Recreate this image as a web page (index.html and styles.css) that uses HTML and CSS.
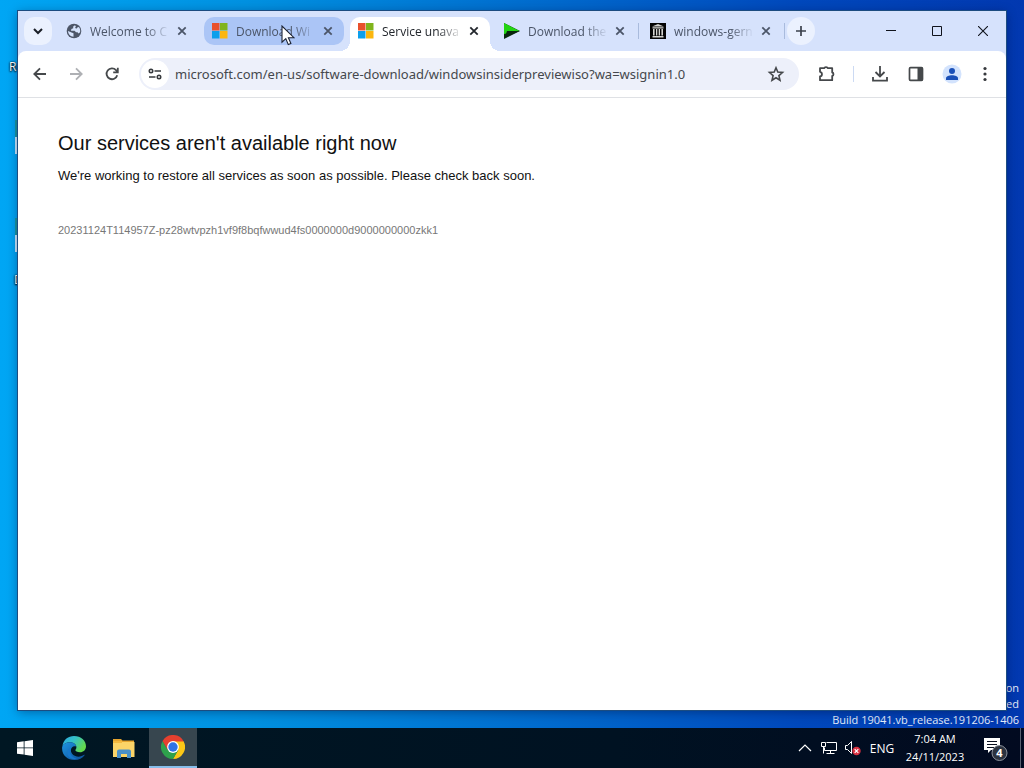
FILE: index.html
```html
<!DOCTYPE html>
<html lang="en">
<head>
<meta charset="utf-8">
<title>Service unavailable</title>
<link rel="stylesheet" href="styles.css">
</head>
<body>
<svg class="defs" aria-hidden="true">
  <symbol id="close" viewBox="0 0 16 16"><path d="M4.300 4.300l7.400 7.400M11.700 4.300l-7.400 7.400" fill="none" stroke="currentColor" stroke-width="1.800"/></symbol>
  <symbol id="ms" viewBox="0 0 16 16"><path fill="#e8502c" d="M0 0h7.500v7.500H0z"/><path fill="#80b41c" d="M8 0h7.500v7.500H8z"/><path fill="#0c9fec" d="M0 8h7.500v7.500H0z"/><path fill="#fbb60e" d="M8 8h7.500v7.500H8z"/></symbol>
</svg>
<main class="desktop">
  <div class="shortcut shortcut-bin">Recycle Bin</div>
  <div class="shortcut-icon icon-a"></div>
  <div class="shortcut-icon icon-b"></div>
  <div class="shortcut shortcut-download">Downloads</div>
  <div class="watermark">
    <span>Windows 10 Enterprise Evaluation</span>
    <span>Windows License is expired</span>
    <span>Build 19041.vb_release.191206-1406</span>
  </div>

  <section class="window">
    <header class="tabstrip">
      <button class="tab-search" aria-label="Search tabs"><svg width="16" height="16" viewBox="0 0 16 16"><path d="M4 6l4 4 4-4" fill="none" stroke="#1b1f27" stroke-width="2"/></svg></button>
      <nav class="tabs">
        <div class="tab">
          <svg width="16" height="16" viewBox="0 0 16 16"><circle cx="8" cy="8" r="7.300" fill="#4c5567"/><path d="M9 2.200L7.200 3.600v1.600L5.400 6l-.4 1.800h3.600l1.400 1.400h1.500l1 1.200 1.600-1.200c.4-2.400-.2-4-1.200-5.200l-1.600.4-1 1.400-1.200-1 .8-1.200zM2 8l3.500 1.600 2 .6v3.600C4.500 13.500 2.200 11.200 2 8z" fill="#d5e2fb"/></svg>
          <a class="title" href="#">Welcome to C</a>
          <button class="close" aria-label="Close tab"><svg width="16" height="16"><use href="#close"/></svg></button>
        </div>
        <div class="tab hovered">
          <svg width="16" height="16"><use href="#ms"/></svg>
          <a class="title" href="#">Download Wi</a>
          <button class="close" aria-label="Close tab"><svg width="16" height="16"><use href="#close"/></svg></button>
        </div>
        <div class="tab active">
          <svg width="16" height="16"><use href="#ms"/></svg>
          <a class="title" href="#">Service unava</a>
          <button class="close" aria-label="Close tab"><svg width="16" height="16"><use href="#close"/></svg></button>
        </div>
        <div class="tab divided">
          <svg width="16" height="16" viewBox="0 0 16 16"><path d="M0 0l16 8-16 8z" fill="#0a2c0e"/><path d="M0 0l15.500 8L0 11z" fill="#22d412"/><path d="M3 8h12.500L1 14z" fill="#08240c"/></svg>
          <a class="title" href="#">Download the</a>
          <button class="close" aria-label="Close tab"><svg width="16" height="16"><use href="#close"/></svg></button>
        </div>
        <div class="tab divided">
          <svg width="16" height="16" viewBox="0 0 16 16"><path d="M0 0h16v16H0z" fill="#050505"/><path d="M8 1l6 2.500H2zM2.500 4.200h11v1.300h-11zM3 6h1.600v6.500H3zM6 6h1.300v6.500H6zM8.700 6H10v6.500H8.700zM11.400 6H13v6.500h-1.600zM2.500 13h11v1.500h-11z" fill="#d4d4d0"/></svg>
          <a class="title" href="#">windows-gern</a>
          <button class="close" aria-label="Close tab"><svg width="16" height="16"><use href="#close"/></svg></button>
        </div>
      </nav>
      <button class="new-tab" aria-label="New tab"><svg width="16" height="16" viewBox="0 0 16 16"><path d="M3 8h10M8 3v10" fill="none" stroke="#3c414c" stroke-width="1.700"/></svg></button>
      <div class="caption">
        <button aria-label="Minimize"><svg width="10" height="10"><path d="M0 4.500h10" stroke="#10131c"/></svg></button>
        <button aria-label="Maximize"><svg width="10" height="10"><path d="M.5.5h9v9h-9z" fill="none" stroke="#10131c"/></svg></button>
        <button aria-label="Close"><svg width="10" height="10"><path d="M0 0l10 10M10 0L0 10" stroke="#10131c" stroke-width="1.100"/></svg></button>
      </div>
    </header>

    <div class="toolbar">
      <div class="navigation">
        <button aria-label="Back"><svg width="20" height="20" viewBox="0 0 20 20"><path d="M16 10H4.500M10 4.300L4.300 10l5.700 5.700" fill="none" stroke="#45484b" stroke-width="1.800"/></svg></button>
        <button aria-label="Forward" disabled><svg width="20" height="20" viewBox="0 0 20 20"><path d="M4 10h11.500M10 4.300l5.700 5.700-5.700 5.700" fill="none" stroke="#aeb0b4" stroke-width="1.800"/></svg></button>
        <button aria-label="Reload"><svg width="20" height="20" viewBox="0 0 20 20"><path d="M15.200 11.200A5.400 5.400 0 1 1 14 6.200l1.600 1.600M15.800 3.800v4.600h-4.600" fill="none" stroke="#45484b" stroke-width="1.800"/></svg></button>
      </div>
      <div class="omnibox">
        <button class="site-info" aria-label="Site information"><svg width="16" height="16" viewBox="0 0 16 16" fill="none" stroke="#35383c" stroke-width="1.600"><circle cx="4" cy="5" r="1.700"/><path d="M7.500 5H14M2 11h6.500"/><circle cx="12" cy="11" r="1.700"/></svg></button>
        <input class="address" type="text" aria-label="Address" value="microsoft.com/en-us/software-download/windowsinsiderpreviewiso?wa=wsignin1.0">
        <button class="bookmark" aria-label="Bookmark this tab"><svg width="18" height="18" viewBox="0 0 18 18"><path d="M9 2.800l1.800 4.300 4.700.4-3.600 3.100 1.100 4.600L9 12.700l-4 2.500 1.100-4.600-3.600-3.100 4.700-.4z" fill="none" stroke="#45484b" stroke-width="1.600"/></svg></button>
      </div>
      <div class="actions">
        <button class="extensions" aria-label="Extensions"><svg width="20" height="20" viewBox="0 0 20 20"><path d="M3 4.200h4.300c.2-1.500 3.200-1.500 3.400 0h4.500v4.300c1.700.3 1.700 3.200 0 3.500v4.200H3v-3.700c2.600-.5 2.600-4.200 0-4.700z" fill="none" stroke="#45484b" stroke-width="1.800" stroke-linejoin="round"/></svg></button>
        <span class="divider"></span>
        <button aria-label="Downloads"><svg width="20" height="20" viewBox="0 0 20 20"><path d="M10 2v10M5.500 8l4.500 4.500L14.500 8M3 13v3.600h14V13" fill="none" stroke="#45484b" stroke-width="1.800"/></svg></button>
        <button aria-label="Side panel"><svg width="20" height="20" viewBox="0 0 20 20"><rect x="3.500" y="3.700" width="13" height="12.600" rx="1" fill="none" stroke="#45484b" stroke-width="1.700"/><path d="M11.500 3.500h5v13h-5z" fill="#45484b"/></svg></button>
        <button aria-label="Profile"><svg width="20" height="20" viewBox="0 0 20 20"><circle cx="10" cy="10" r="9.500" fill="#d3e3fd"/><circle cx="10" cy="7" r="3" fill="#1a50b8"/><path d="M4 16v-1.800c0-4 12-4 12 0V16z" fill="#1a50b8"/></svg></button>
        <button class="menu" aria-label="Menu"><svg width="20" height="20" viewBox="0 0 20 20" fill="#35383c"><circle cx="10" cy="4.500" r="1.600"/><circle cx="10" cy="10" r="1.600"/><circle cx="10" cy="15.500" r="1.600"/></svg></button>
      </div>
    </div>

    <article class="page">
      <h1>Our services aren't available right now</h1>
      <p class="message">We're working to restore all services as soon as possible. Please check back soon.</p>
      <p class="reference">20231124T114957Z-pz28wtvpzh1vf9f8bqfwwud4fs0000000d9000000000zkk1</p>
    </article>
  </section>

  <svg class="cursor" width="14" height="21" viewBox="0 0 14 21"><path d="M1 1v16.200l3.800-3.600 2.500 6 2.600-1.100-2.500-5.800H13z" fill="#fff" stroke="#1b2233" stroke-width="1.100"/></svg>
</main>

<footer class="taskbar">
  <div class="apps">
    <button class="start" aria-label="Start"><svg width="16" height="16" viewBox="0 0 16 16" fill="#fff"><path d="M0 2.200l6.700-.9v6.200H0zM7.500 1.200L16 0v7.500H7.500zM0 8.300h6.700v6.300L0 13.700zM7.500 8.300H16V16l-8.500-1.200z"/></svg></button>
    <button aria-label="Edge"><svg width="24" height="24" viewBox="0 0 24 24">
      <defs>
        <linearGradient id="edge-top" x1="0" y1="0" x2="1" y2=".5"><stop offset="0" stop-color="#2aa8e6"/><stop offset=".5" stop-color="#35c1c6"/><stop offset="1" stop-color="#63d84c"/></linearGradient>
        <linearGradient id="edge-low" x1="0" y1="0" x2="1" y2="1"><stop offset="0" stop-color="#1e94e0"/><stop offset="1" stop-color="#0d4d98"/></linearGradient>
      </defs>
      <path d="M.4 10C1.500 3.600 6.200 0 12 0c7 0 12 4.700 12 10.200 0 3.700-2.700 6-6 6-3 0-4.600-1.100-4.600-2 0-.8 1-1 1-2.900C14.400 8.400 11.600 6.200 8 6.200 4.500 6.200 1.800 7.700.4 10z" fill="url(#edge-top)"/>
      <path d="M.2 10.800C1.200 7.700 4 6.200 8 6.200c3.400 0 6 2 6.300 4.400-5-2.200-8.600 6-1.100 9.400 3.200 1.400 6.600.5 8.900-1.200.4-.3.700.1.500.4C20.400 22.200 17 24 12.500 24 5.200 24-.8 18.500.2 10.800z" fill="url(#edge-low)"/>
      <path d="M9.600 11.400C5.800 14.500 8 21.500 15 22.800c-6 1.400-10-2.300-9.700-6.200.2-2.300 1.700-4.500 4.300-5.200z" fill="#1677cc"/>
    </svg></button>
    <button aria-label="File Explorer"><svg width="24" height="24" viewBox="0 0 24 24"><path d="M1 3h8l1.500 1.500H22V9H1z" fill="#e6a52f"/><path d="M1 6h21.500v15H1z" fill="#fbd468"/><path d="M1 5h9v2H1z" fill="#f3b93f"/><path d="M5 22v-6.500a2 2 0 0 1 2-2h10a2 2 0 0 1 2 2V22h-4v-4H9v4z" fill="#4a90c8"/></svg></button>
    <button class="running" aria-label="Chrome"><svg width="24" height="24" viewBox="0 0 24 24"><path d="M12 12V6h10.400A12 12 0 0 1 12 24l5.200-9z" fill="#fbc717"/><path d="M12 12l5.200 3L12 24A12 12 0 0 1 1.600 6l5.200 9z" fill="#2ea14c"/><path d="M12 6.500h10.700A12 12 0 0 0 1.600 6l5.200 9z" fill="#e5402f"/><circle cx="12" cy="12" r="5.900" fill="#fff"/><circle cx="12" cy="12" r="4.700" fill="#2f73e6"/></svg></button>
  </div>
  <div class="tray">
    <button aria-label="Show hidden icons"><svg width="14" height="8" viewBox="0 0 14 8"><path d="M1 7l6-6 6 6" fill="none" stroke="#fff" stroke-width="1.200"/></svg></button>
    <button aria-label="Network"><svg width="16" height="14" viewBox="0 0 16 14" fill="none" stroke="#fff"><path d="M5.500 1.500h10v8h-12v-3M9.500 9.500v3M5.500 12.500h8M.5 1.500h4v4h-4zM2.500 5.500v7"/></svg></button>
    <button aria-label="Volume muted"><svg width="16" height="16" viewBox="0 0 16 16"><path d="M.5 5.500h2l4-4v12l-4-4h-2z" fill="none" stroke="#fff"/><circle cx="11.500" cy="11" r="4.200" fill="#d93040"/><path d="M9.700 9.200l3.600 3.600M13.300 9.200l-3.600 3.600" stroke="#fff" stroke-width="1.200"/></svg></button>
    <button class="language">ENG</button>
    <button class="clock"><span>7:04 AM</span><span>24/11/2023</span></button>
    <button class="notifications" aria-label="4 notifications"><svg width="26" height="26" viewBox="0 0 26 26"><path d="M1 3h16v12H8l-3 3v-3H1z" fill="#fff"/><path d="M4 6.500h10M4 9.500h10M4 12.500h7" stroke="#0a1020"/><circle cx="16.500" cy="18" r="7.500" fill="#2c3340" stroke="#8c929c"/><text class="badge" x="16.500" y="22" text-anchor="middle">4</text></svg></button>
    <span class="show-desktop"></span>
  </div>
</footer>
</body>
</html>
```
FILE: styles.css
```css
* { box-sizing: border-box; }

body {
  margin: 0;
  height: 100vh;
  display: flex;
  flex-direction: column;
  overflow: hidden;
  font-family: "Open Sans", "Noto Sans", sans-serif;
  font-size: 12px;
}

button {
  display: flex;
  align-items: center;
  justify-content: center;
  padding: 0;
  border: 0;
  background: none;
  color: inherit;
  font: inherit;
}

.defs { position: absolute; width: 0; height: 0; }

.desktop {
  position: relative;
  flex: 1;
  overflow: hidden;
  background: linear-gradient(90deg, #00a6f4 0%, #0090e0 25%, #0068cc 55%, #0048bc 78%, #0238b0 100%);
}

.shortcut {
  position: absolute;
  color: #fff;
  text-shadow: 0 1px 2px #000, 0 0 2px #000;
}
.shortcut-bin { left: 9px; top: 58px; }
.shortcut-download { left: 14px; top: 271px; }
.shortcut-icon {
  position: absolute;
  left: 15px;
  width: 20px;
  height: 34px;
  background: linear-gradient(#1a98a0 50%, #c8e8fc 50%);
}
.icon-a { top: 120px; }
.icon-b { top: 218px; }

.watermark {
  position: absolute;
  right: 5px;
  bottom: 0;
  display: flex;
  flex-direction: column;
  align-items: flex-end;
  color: #e4ecfa;
  line-height: 16px;
  font-size: 11px;
}

.window {
  position: absolute;
  inset: 11px 18px 18px;
  display: flex;
  flex-direction: column;
  background: #d6e2fc;
  box-shadow: 0 0 0 1px #1c4c80, 0 2px 10px rgba(0, 0, 40, .4);
}

.tabstrip {
  display: flex;
  align-items: center;
  height: 40px;
  padding-left: 6px;
}

.tab-search, .new-tab {
  flex: none;
  width: 28px;
  height: 28px;
  background: #ebf1fe;
}
.tab-search { border-radius: 10px; margin-right: 6px; }
.new-tab { border-radius: 50%; margin-left: 5px; }

.tabs { display: flex; gap: 6px; height: 28px; }

.tab {
  position: relative;
  display: flex;
  align-items: center;
  gap: 8px;
  width: 140px;
  height: 28px;
  padding: 0 8px;
  border-radius: 10px;
  color: #4b5568;
}
.tab > svg { flex: none; }
.title {
  flex: 1;
  margin-right: -4px;
  overflow: hidden;
  white-space: nowrap;
  color: inherit;
  text-decoration: none;
  mask-image: linear-gradient(90deg, #000 70%, transparent);
}
.close { flex: none; width: 16px; height: 16px; }
.hovered { background: #abc5f6; }
.active {
  height: 34px;
  padding-bottom: 6px;
  background: #fff;
  border-radius: 10px 10px 0 0;
  color: #22262c;
}
.active::before, .active::after {
  content: "";
  position: absolute;
  bottom: 0;
  width: 10px;
  height: 10px;
}
.active::before {
  right: 100%;
  background: radial-gradient(circle at 0 0, transparent 10px, #fff 10px);
}
.active::after {
  left: 100%;
  background: radial-gradient(circle at 100% 0, transparent 10px, #fff 10px);
}
.divided::after {
  content: "";
  position: absolute;
  right: -3px;
  width: 1px;
  height: 16px;
  background: #a9bbdd;
}

.caption { display: flex; margin-left: auto; align-self: stretch; }
.caption button { width: 46px; }

.toolbar {
  display: flex;
  align-items: center;
  height: 47px;
  padding: 0 6px 0 4px;
  border-bottom: 1px solid #dfe1e5;
  border-radius: 8px 8px 0 0;
  background: #fff;
}
.navigation { display: flex; }
.navigation button { width: 36px; height: 36px; }

.omnibox {
  flex: 1;
  display: flex;
  align-items: center;
  height: 32px;
  margin-left: 9px;
  padding: 0 2px;
  border-radius: 16px;
  background: #edf0fa;
}
.site-info {
  flex: none;
  width: 28px;
  height: 28px;
  border-radius: 50%;
  background: #fff;
}
.address {
  flex: 1;
  min-width: 0;
  margin-left: 6px;
  padding: 0;
  border: 0;
  outline: 0;
  background: none;
  color: #45484d;
  font: 13px "Noto Sans", "Open Sans", sans-serif;
}
.bookmark { width: 42px; height: 28px; }

.actions { display: flex; align-items: center; padding-left: 10px; }
.actions button { width: 36px; height: 36px; }
.actions .menu { width: 30px; }
.divider { width: 1px; height: 16px; margin: 0 8px; background: #ccdaf3; }

.page {
  flex: 1;
  padding: 31px 40px;
  background: #fff;
  font-family: "Liberation Sans", Arial, sans-serif;
  color: #111;
}
.page h1 { margin: 0 0 11px; font-size: 20px; line-height: 28px; font-weight: 400; }
.page p { margin: 0; }
.message { font-size: 13px; line-height: 16px; }
.page .reference { margin-top: 38px; color: #777; font-size: 11px; line-height: 16px; }

.cursor { position: absolute; left: 281px; top: 25px; }

.taskbar {
  display: flex;
  justify-content: space-between;
  height: 40px;
  background: linear-gradient(90deg, #001723, #001222 60%, #020a20);
  color: #fff;
}
.apps, .tray { display: flex; }
.apps button { width: 50px; }
.apps .start { width: 49px; }
.apps .running { width: 48px; background: #37464f; border-bottom: 2px solid #86bdea; }
.tray button { width: 24px; }
.tray .language { width: 34px; }
.tray .clock { width: 72px; flex-direction: column; line-height: 18px; font-size: 11px; }
.tray .notifications { width: 49px; }
.badge { fill: #fff; font: bold 11px "Open Sans", sans-serif; }
.show-desktop { width: 4px; border-left: 1px solid #596070; }
```
